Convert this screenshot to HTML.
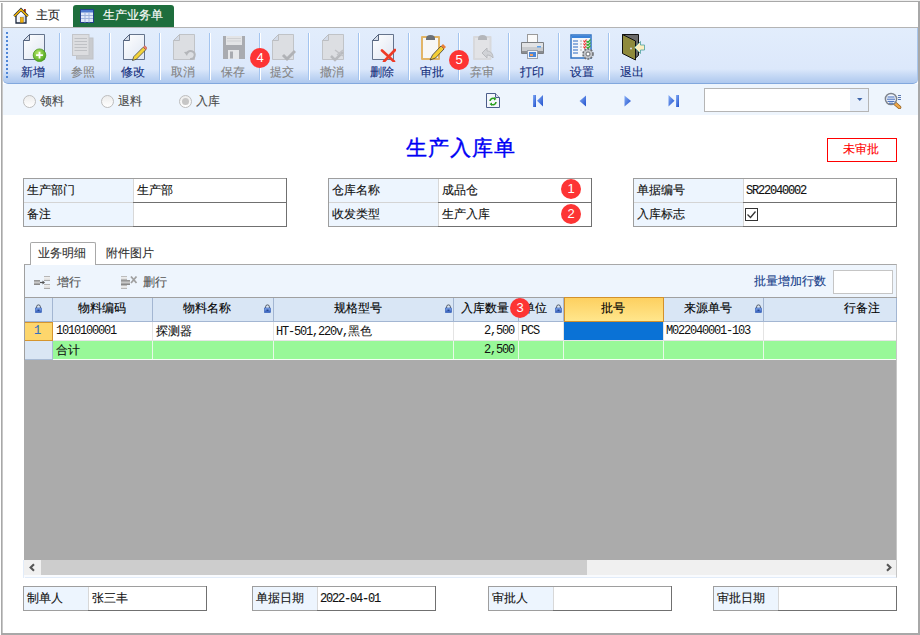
<!DOCTYPE html>
<html><head><meta charset="utf-8"><style>
*{margin:0;padding:0;box-sizing:border-box}
html,body{width:920px;height:635px;overflow:hidden;background:#fff;font-family:"Liberation Sans",sans-serif;font-size:12px;color:#111}
.a{position:absolute}
.t{position:absolute;white-space:nowrap;line-height:14px;font-size:12px;-webkit-text-stroke-width:0.12px}
.m{font-family:"Liberation Mono",monospace;font-size:10px}
</style></head><body>
<div class="a" style="left:0px;top:0px;width:920px;height:1px;background:#efefef"></div>
<div class="a" style="left:0px;top:1px;width:920px;height:1px;background:#a8a8a8"></div>
<div class="a" style="left:1px;top:3px;width:1px;height:632px;background:#a8a8a8"></div>
<div class="a" style="left:2px;top:3px;width:1px;height:632px;background:#c8c8c8"></div>
<div class="a" style="left:918px;top:1px;width:2px;height:634px;background:#a8a8a8"></div>
<div class="a" style="left:1px;top:633px;width:919px;height:2px;background:#a8a8a8"></div>
<div class="a" style="left:2px;top:27px;width:916px;height:1px;background:#b4b4b4"></div>
<svg class="a" style="left:13px;top:7px" width="16" height="17" viewBox="0 0 16 17">
 <defs><linearGradient id="hw" x1="0" y1="0" x2="1" y2="0"><stop offset="0" stop-color="#fff"/><stop offset="1" stop-color="#c9d3e6"/></linearGradient></defs>
 <path d="M3 8.5v7.5h10v-7.5" fill="url(#hw)" stroke="#1e2a40" stroke-width="1.3"/>
 <rect x="11" y="2" width="1.8" height="4" fill="#9a2a1e"/>
 <path d="M1.3 9.3L8 2.6 14.7 9.3" fill="none" stroke="#1e2a40" stroke-width="2.8"/>
 <path d="M1.3 9.3L8 2.6 14.7 9.3" fill="none" stroke="#f4b400" stroke-width="1.5"/>
 <rect x="7.3" y="10.5" width="3" height="5" fill="#f2b20e" stroke="#b07a00" stroke-width="0.5"/>
</svg>
<div class="t" style="left:36px;top:8px;color:#222">主页</div>
<div class="a" style="left:73px;top:5px;width:101px;height:22px;background:#1e6e3d;border-radius:3px 3px 0 0"></div>
<svg class="a" style="left:80px;top:9px" width="14" height="14" viewBox="0 0 14 14">
 <rect x="0.5" y="0.5" width="13" height="13" fill="#dfe8f8" stroke="#23408a"/>
 <rect x="1" y="1" width="12" height="2.5" fill="#4f7ad0"/>
 <path d="M1 6.5h12M1 9.5h12M5 3.5v10M9 3.5v10" stroke="#9fb4dc" stroke-width="1"/>
</svg>
<div class="t" style="left:103px;top:8px;color:#fff">生产业务单</div>
<div class="a" style="left:3px;top:28px;width:915px;height:56px;border-radius:0 0 5px 5px;background:linear-gradient(#e2edfc 0px,#dce8fb 41px,#cadcf6 46px,#aec8ee 55px);border-bottom:1px solid #82a8de"></div>
<div class="a" style="left:917px;top:28px;width:1px;height:52px;background:#a9c6ec"></div>
<div class="a" style="left:6px;top:32px;width:2px;height:47px;background:repeating-linear-gradient(#4f86d6 0 2px,transparent 2px 4px)"></div>
<svg class="a" style="left:21px;top:32px" width="26" height="30" viewBox="0 0 26 30"><defs><linearGradient id="pg" x1="0" y1="0" x2="1" y2="1"><stop offset="0" stop-color="#fff"/><stop offset="1" stop-color="#dfe6f2"/></linearGradient></defs><path d="M8.5 2.5H23.5V27.5H2.5V8.5z" fill="url(#pg)" stroke="#56657f" stroke-width="0.9"/><path d="M8.5 2.5V8.5H2.5z" fill="#d3dbe8" stroke="#56657f" stroke-linejoin="bevel"/><defs><radialGradient id="gc" cx="0.4" cy="0.35" r="0.7"><stop offset="0" stop-color="#b8ea6a"/><stop offset="1" stop-color="#48a018"/></radialGradient></defs><circle cx="18.5" cy="23.2" r="6.3" fill="url(#gc)" stroke="#4a9a1e" stroke-width="0.8"/><path d="M18.5 19.8v6.8M15.1 23.2h6.8" stroke="#fff" stroke-width="1.8"/></svg>
<div class="t" style="left:8px;top:65px;width:50px;text-align:center;color:#142e7c">新增</div>
<div class="a" style="left:59px;top:33px;width:1px;height:47px;background:#a3c4ef"></div>
<div class="a" style="left:60px;top:33px;width:1px;height:47px;background:#fff"></div>
<svg class="a" style="left:71px;top:32px" width="26" height="30" viewBox="0 0 26 30"><rect x="5.5" y="6" width="16.5" height="21" fill="#c9cbcf" stroke="#c0c2c6"/><rect x="1.5" y="2.5" width="16.5" height="21" fill="#dcdde0" stroke="#c4c6ca"/><path d="M3.5 6.5h12.5M3.5 9.5h12.5M3.5 12.5h12.5M3.5 15.5h12.5M3.5 18.5h12.5" stroke="#bfc1c5"/></svg>
<div class="t" style="left:58px;top:65px;width:50px;text-align:center;color:#858585">参照</div>
<div class="a" style="left:109px;top:33px;width:1px;height:47px;background:#a3c4ef"></div>
<div class="a" style="left:110px;top:33px;width:1px;height:47px;background:#fff"></div>
<svg class="a" style="left:121px;top:32px" width="26" height="30" viewBox="0 0 26 30"><path d="M8.5 2.5H23.5V27.5H2.5V8.5z" fill="url(#pg)" stroke="#56657f" stroke-width="0.9"/><path d="M8.5 2.5V8.5H2.5z" fill="#d3dbe8" stroke="#56657f" stroke-linejoin="bevel"/><path d="M11.5 28.5l1.2-3.8 9.5-9.5 2.6 2.6-9.5 9.5z" fill="#f4d43a" stroke="#333" stroke-width="0.7"/><path d="M22.2 15.2l1.6-1.6 2.6 2.6-1.6 1.6z" fill="#e8806a" stroke="#a55" stroke-width="0.5"/></svg>
<div class="t" style="left:108px;top:65px;width:50px;text-align:center;color:#142e7c">修改</div>
<div class="a" style="left:159px;top:33px;width:1px;height:47px;background:#a3c4ef"></div>
<div class="a" style="left:160px;top:33px;width:1px;height:47px;background:#fff"></div>
<svg class="a" style="left:171px;top:32px" width="26" height="30" viewBox="0 0 26 30"><path d="M8.5 2.5H23.5V27.5H2.5V8.5z" fill="#dcdee2" stroke="#bcbec2" stroke-width="0.9"/><path d="M8.5 2.5V8.5H2.5z" fill="#d3dbe8" stroke="#bcbec2" stroke-linejoin="bevel"/><path d="M16 21.5a4 4 0 1 1 3 5.5" fill="none" stroke="#b4b6ba" stroke-width="2"/><path d="M13 20l4.5-0.5-1.5 4.5z" fill="#b4b6ba"/></svg>
<div class="t" style="left:158px;top:65px;width:50px;text-align:center;color:#858585">取消</div>
<div class="a" style="left:209px;top:33px;width:1px;height:47px;background:#a3c4ef"></div>
<div class="a" style="left:210px;top:33px;width:1px;height:47px;background:#fff"></div>
<svg class="a" style="left:221px;top:32px" width="26" height="30" viewBox="0 0 26 30"><path d="M2 4h22v23h-22z" fill="#a9abb0"/><rect x="5" y="4" width="16" height="9" fill="#e3e4e6"/><path d="M6 6.5h14M6 9h14" stroke="#cfd0d3"/><rect x="7" y="18" width="11" height="9" fill="#e6e7e9"/><rect x="9" y="19.5" width="3" height="7" fill="#a9abb0"/></svg>
<div class="t" style="left:208px;top:65px;width:50px;text-align:center;color:#858585">保存</div>
<div class="a" style="left:259px;top:33px;width:1px;height:47px;background:#a3c4ef"></div>
<div class="a" style="left:260px;top:33px;width:1px;height:47px;background:#fff"></div>
<svg class="a" style="left:270px;top:32px" width="26" height="30" viewBox="0 0 26 30"><path d="M8.5 2.5H23.5V27.5H2.5V8.5z" fill="#dcdee2" stroke="#bcbec2" stroke-width="0.9"/><path d="M8.5 2.5V8.5H2.5z" fill="#d3dbe8" stroke="#bcbec2" stroke-linejoin="bevel"/><path d="M13 23l4 4 8-8" fill="none" stroke="#b0b2b6" stroke-width="3"/></svg>
<div class="t" style="left:257px;top:65px;width:50px;text-align:center;color:#858585">提交</div>
<div class="a" style="left:308px;top:33px;width:1px;height:47px;background:#a3c4ef"></div>
<div class="a" style="left:309px;top:33px;width:1px;height:47px;background:#fff"></div>
<svg class="a" style="left:320px;top:32px" width="26" height="30" viewBox="0 0 26 30"><path d="M8.5 2.5H23.5V27.5H2.5V8.5z" fill="#dcdee2" stroke="#bcbec2" stroke-width="0.9"/><path d="M8.5 2.5V8.5H2.5z" fill="#d3dbe8" stroke="#bcbec2" stroke-linejoin="bevel"/><path d="M11 24l4 4 8-8" fill="none" stroke="#b8babe" stroke-width="2.5"/><path d="M15 18l8 6M23 18l-6 5" stroke="#c0c2c6" stroke-width="1.5"/></svg>
<div class="t" style="left:307px;top:65px;width:50px;text-align:center;color:#858585">撤消</div>
<div class="a" style="left:358px;top:33px;width:1px;height:47px;background:#a3c4ef"></div>
<div class="a" style="left:359px;top:33px;width:1px;height:47px;background:#fff"></div>
<svg class="a" style="left:370px;top:32px" width="26" height="30" viewBox="0 0 26 30"><path d="M8.5 2.5H23.5V27.5H2.5V8.5z" fill="url(#pg)" stroke="#56657f" stroke-width="0.9"/><path d="M8.5 2.5V8.5H2.5z" fill="#d3dbe8" stroke="#56657f" stroke-linejoin="bevel"/><path d="M12 18.5l12 11M25 18l-11 11.5" stroke="#ee3a26" stroke-width="2.6" stroke-linecap="round"/></svg>
<div class="t" style="left:357px;top:65px;width:50px;text-align:center;color:#142e7c">删除</div>
<div class="a" style="left:408px;top:33px;width:1px;height:47px;background:#a3c4ef"></div>
<div class="a" style="left:409px;top:33px;width:1px;height:47px;background:#fff"></div>
<svg class="a" style="left:420px;top:32px" width="26" height="30" viewBox="0 0 26 30"><rect x="1" y="4" width="19" height="24" rx="1" fill="#e2b566"/><rect x="3" y="6" width="15" height="20" fill="#f7f7f5"/><path d="M6 6.5c0-2 1.5-3.5 4.5-3.5s4.5 1.5 4.5 3.5v1.5h-9z" fill="#6b7077"/><path d="M10 28l2.5-5 8.5-9 3 3-8.5 9z" fill="#f4cf35" stroke="#3a3a3a" stroke-width="0.8"/><path d="M21 14l2-2 3 3-2 2z" fill="#e8803a"/></svg>
<div class="t" style="left:407px;top:65px;width:50px;text-align:center;color:#142e7c">审批</div>
<div class="a" style="left:458px;top:33px;width:1px;height:47px;background:#a3c4ef"></div>
<div class="a" style="left:459px;top:33px;width:1px;height:47px;background:#fff"></div>
<svg class="a" style="left:470px;top:32px" width="26" height="30" viewBox="0 0 26 30"><rect x="3" y="4" width="18.5" height="24" rx="1" fill="#d8d9dc"/><rect x="5" y="6" width="14.5" height="20" fill="#e2e3e6"/><path d="M8 6.5c0-2 1.5-3.5 4.5-3.5s4.5 1.5 4.5 3.5v1.5h-9z" fill="#b4b6ba"/><path d="M12 21l5-5v3c4 0 6 3 6 7-1.5-2-3-3-6-3v3z" fill="#d0d2d6" stroke="#b8babe"/></svg>
<div class="t" style="left:457px;top:65px;width:50px;text-align:center;color:#858585">弃审</div>
<div class="a" style="left:508px;top:33px;width:1px;height:47px;background:#a3c4ef"></div>
<div class="a" style="left:509px;top:33px;width:1px;height:47px;background:#fff"></div>
<svg class="a" style="left:520px;top:32px" width="26" height="30" viewBox="0 0 26 30"><rect x="7.5" y="2.5" width="10" height="9" fill="#fafafa" stroke="#9a9a9a"/><path d="M1.5 10.5h22v11h-22z" fill="#c9cbce" stroke="#7c7f83"/><rect x="2" y="11" width="21" height="4" fill="#e2e3e5"/><rect x="2" y="19" width="21" height="2" fill="#8a8d91"/><rect x="7.5" y="18.5" width="10" height="8" fill="#f2f4f8" stroke="#9aa0aa"/><rect x="9" y="20" width="7" height="5" fill="#4a86d8"/><rect x="10" y="22" width="3" height="2" fill="#f0a060"/><rect x="17" y="14" width="4" height="1.5" fill="#5fa0e8"/></svg>
<div class="t" style="left:507px;top:65px;width:50px;text-align:center;color:#142e7c">打印</div>
<div class="a" style="left:558px;top:33px;width:1px;height:47px;background:#a3c4ef"></div>
<div class="a" style="left:559px;top:33px;width:1px;height:47px;background:#fff"></div>
<svg class="a" style="left:570px;top:32px" width="26" height="30" viewBox="0 0 26 30"><rect x="1" y="3" width="20" height="23" fill="#f4f7fb" stroke="#2f72c2" stroke-width="1.5"/><rect x="1.5" y="3.5" width="19" height="2.5" fill="#3a82d8"/><path d="M3 9h5M3 12h5M3 15h5M3 18h5M3 21h5" stroke="#8fb0de" stroke-width="2"/><path d="M10 9h2M10 12h2M10 15h2M10 18h2" stroke="#b0b0b0"/><path d="M13.5 8.5l1 1.5 2-2.5M13.5 11.5l1 1.5 2-2.5M13.5 14.5l1 1.5 2-2.5" stroke="#e33" stroke-width="1.2" fill="none"/><path d="M16.5 9l1.5 1.5 2.5-3M16.5 12l1.5 1.5 2.5-3M16.5 15l1.5 1.5 2.5-3" stroke="#3a3" stroke-width="1.2" fill="none"/><circle cx="18" cy="22" r="5" fill="#c2c4c8" stroke="#6c6f73" stroke-width="1.6" stroke-dasharray="2 1.2"/><circle cx="18" cy="22" r="2" fill="#fff" stroke="#6c6f73"/></svg>
<div class="t" style="left:557px;top:65px;width:50px;text-align:center;color:#142e7c">设置</div>
<div class="a" style="left:608px;top:33px;width:1px;height:47px;background:#a3c4ef"></div>
<div class="a" style="left:609px;top:33px;width:1px;height:47px;background:#fff"></div>
<svg class="a" style="left:620px;top:32px" width="26" height="30" viewBox="0 0 26 30"><path d="M2.5 2.5h16v21l-3 2.5z" fill="#6a6a6a" stroke="#111"/><path d="M2.5 2.5l13 6.5v19l-13-6.5z" fill="#8f8a3c" stroke="#111"/><circle cx="11" cy="16.5" r="1" fill="#d8d8e8"/><path d="M14.5 15.5l6-6v3.5h4v5h-4v3.5z" fill="#fcefc0" stroke="#49a0a0" stroke-width="0.8"/></svg>
<div class="t" style="left:607px;top:65px;width:50px;text-align:center;color:#142e7c">退出</div>
<div class="a" style="left:250px;top:48px;width:20px;height:20px;border-radius:50%;background:#fd3434;color:#fff;text-align:center;line-height:20px;font-size:13px">4</div>
<div class="a" style="left:449px;top:50px;width:20px;height:20px;border-radius:50%;background:#fd3434;color:#fff;text-align:center;line-height:20px;font-size:13px">5</div>
<div class="a" style="left:3px;top:84px;width:915px;height:31px;background:#eef5fd"></div>
<div class="a" style="left:23px;top:95px;width:13px;height:13px;border-radius:50%;border:1px solid #bdbdbd;background:linear-gradient(#ececec,#fff)"></div>
<div class="t" style="left:40px;top:94px;color:#4a4a4a">领料</div>
<div class="a" style="left:101px;top:95px;width:13px;height:13px;border-radius:50%;border:1px solid #bdbdbd;background:linear-gradient(#ececec,#fff)"></div>
<div class="t" style="left:118px;top:94px;color:#4a4a4a">退料</div>
<div class="a" style="left:179px;top:95px;width:13px;height:13px;border-radius:50%;border:1px solid #bdbdbd;background:linear-gradient(#ececec,#fff)"></div>
<div class="a" style="left:182px;top:98px;width:7px;height:7px;border-radius:50%;background:#c6c6c6"></div>
<div class="t" style="left:196px;top:94px;color:#4a4a4a">入库</div>
<svg class="a" style="left:486px;top:93px" width="14" height="15" viewBox="0 0 14 15">
<path d="M0.5 0.5h9l4 4v10h-13z" fill="#f4f7fc" stroke="#4b5d8a"/><path d="M9.5 0.5v4h4" fill="#dde" stroke="#4b5d8a"/>
<path d="M4 8a3 3 0 0 1 5-2M10 9a3 3 0 0 1-5 2" stroke="#2aa01e" stroke-width="1.6" fill="none"/>
<path d="M8 4l2.5 2-2.5 1.5zM6 13l-2.5-2 2.5-1.5z" fill="#2aa01e"/></svg>
<svg class="a" style="left:0;top:0" width="1" height="1"><defs><linearGradient id="ng" x1="0" y1="0" x2="1" y2="1"><stop offset="0" stop-color="#86aef6"/><stop offset="1" stop-color="#1f4fcc"/></linearGradient></defs></svg>
<svg class="a" style="left:533px;top:95px" width="11" height="12" viewBox="0 0 11 12"><rect x="0" y="0" width="3" height="12" fill="url(#ng)"/><path d="M10 0v11.5l-6-5.75z" fill="url(#ng)"/></svg>
<svg class="a" style="left:579px;top:95px" width="8" height="12" viewBox="0 0 8 12"><path d="M7 0.5v11l-6.5-5.5z" fill="url(#ng)"/></svg>
<svg class="a" style="left:624px;top:95px" width="8" height="12" viewBox="0 0 8 12"><path d="M0.5 0.5v11l6.5-5.5z" fill="url(#ng)"/></svg>
<svg class="a" style="left:668px;top:95px" width="11" height="12" viewBox="0 0 11 12"><path d="M0.5 0v11.5l6-5.75z" fill="url(#ng)"/><rect x="8" y="0" width="3" height="12" fill="url(#ng)"/></svg>
<div class="a" style="left:704px;top:88px;width:165px;height:24px;background:#fff;border:1px solid #b5b5b5"></div>
<div class="a" style="left:850px;top:89px;width:18px;height:22px;background:#e8f0fb"></div>
<svg class="a" style="left:857px;top:98px" width="6" height="4" viewBox="0 0 6 4"><path d="M0 0h5.5l-2.75 3z" fill="#3f66aa"/></svg>
<svg class="a" style="left:884px;top:92px" width="19" height="17" viewBox="0 0 19 17">
<path d="M11 11.5l4.5 3.8" stroke="#8a5a20" stroke-width="3.6" stroke-linecap="round"/><path d="M11 11.5l4.5 3.8" stroke="#f0a848" stroke-width="2.4" stroke-linecap="round"/>
<circle cx="7" cy="7" r="5.6" fill="#f2f7ff" stroke="#7d838c" stroke-width="1.5"/>
<path d="M3.5 5h7M3 7.2h8M3.5 9.4h7M5 11.2h4" stroke="#2a58b0" stroke-width="0.9"/>
<path d="M14 3.5h3M14 5.5h3M14 7.5h3" stroke="#4a6aa8" stroke-width="0.9"/></svg>
<div class="t" style="left:406px;top:136px;font-size:21px;line-height:24px;color:#0000f5;letter-spacing:0.9px;-webkit-text-stroke:0.4px #0000f5">生产入库单</div>
<div class="a" style="left:827px;top:138px;width:70px;height:24px;border:1px solid #f00"></div>
<div class="t" style="left:843px;top:142px;color:#f00">未审批</div>
<div class="a" style="left:23px;top:178px;width:264px;height:49px;background:#fff;border:1px solid #9e9e9e"></div>
<div class="a" style="left:24px;top:179px;width:109px;height:47px;background:#edf5fe"></div>
<div class="a" style="left:133px;top:179px;width:1px;height:47px;background:#d8d8d8"></div>
<div class="t" style="left:27px;top:183px;">生产部门</div>
<div class="t" style="left:137px;top:183px">生产部</div>
<div class="a" style="left:24px;top:202px;width:109px;height:1px;background:#d4d4d4"></div>
<div class="a" style="left:133px;top:202px;width:154px;height:1px;background:#707070"></div>
<div class="t" style="left:27px;top:207px;">备注</div>
<div class="a" style="left:133px;top:226px;width:154px;height:1px;background:#707070"></div>
<div class="a" style="left:286px;top:178px;width:1px;height:49px;background:#707070"></div>
<div class="a" style="left:328px;top:178px;width:264px;height:49px;background:#fff;border:1px solid #9e9e9e"></div>
<div class="a" style="left:329px;top:179px;width:109px;height:47px;background:#edf5fe"></div>
<div class="a" style="left:438px;top:179px;width:1px;height:47px;background:#d8d8d8"></div>
<div class="t" style="left:332px;top:183px;">仓库名称</div>
<div class="t" style="left:442px;top:183px">成品仓</div>
<div class="a" style="left:329px;top:202px;width:109px;height:1px;background:#d4d4d4"></div>
<div class="a" style="left:438px;top:202px;width:154px;height:1px;background:#707070"></div>
<div class="t" style="left:332px;top:207px;">收发类型</div>
<div class="t" style="left:442px;top:207px">生产入库</div>
<div class="a" style="left:438px;top:226px;width:154px;height:1px;background:#707070"></div>
<div class="a" style="left:591px;top:178px;width:1px;height:49px;background:#707070"></div>
<div class="a" style="left:633px;top:178px;width:264px;height:49px;background:#fff;border:1px solid #9e9e9e"></div>
<div class="a" style="left:634px;top:179px;width:109px;height:47px;background:#edf5fe"></div>
<div class="a" style="left:743px;top:179px;width:1px;height:47px;background:#d8d8d8"></div>
<div class="t" style="left:637px;top:183px;">单据编号</div>
<div class="a" style="left:634px;top:202px;width:109px;height:1px;background:#d4d4d4"></div>
<div class="a" style="left:743px;top:202px;width:154px;height:1px;background:#707070"></div>
<div class="t" style="left:637px;top:207px;">入库标志</div>
<div class="a" style="left:743px;top:226px;width:154px;height:1px;background:#707070"></div>
<div class="a" style="left:896px;top:178px;width:1px;height:49px;background:#707070"></div>
<div class="t" style="left:746px;top:184px;font-family:Liberation Mono;font-size:12px;letter-spacing:-1.2px;color:#111">SR22040002</div>
<div class="a" style="left:561px;top:179px;width:20px;height:20px;border-radius:50%;background:#fd3434;color:#fff;text-align:center;line-height:20px;font-size:13px">1</div>
<div class="a" style="left:561px;top:204px;width:20px;height:20px;border-radius:50%;background:#fd3434;color:#fff;text-align:center;line-height:20px;font-size:13px">2</div>
<svg class="a" style="left:745px;top:208px" width="13" height="13" viewBox="0 0 13 13">
<rect x="0.5" y="0.5" width="12" height="12" fill="#fff" stroke="#333"/><path d="M2.5 6.5l3 3 5-6" fill="none" stroke="#333" stroke-width="1.3"/></svg>
<div class="a" style="left:24px;top:264px;width:873px;height:314px;background:#eef5fd;border:1px solid #c6c6c6;border-left:1px solid #a0a0a0;border-top:1px solid #a8a8a8;border-bottom:1px solid #e2ecf9"></div>
<div class="a" style="left:25px;top:575px;width:871px;height:2px;background:#f9fbfe"></div>
<div class="a" style="left:30px;top:242px;width:66px;height:23px;background:#fff;border:1px solid #a8a8a8;border-bottom:none;border-radius:2px 2px 0 0"></div>
<div class="t" style="left:38px;top:246px;color:#333">业务明细</div>
<div class="t" style="left:106px;top:246px;color:#333">附件图片</div>
<svg class="a" style="left:33px;top:275px" width="18" height="15" viewBox="0 0 18 15">
<defs><linearGradient id="gb" x1="0" y1="0" x2="0" y2="1"><stop offset="0" stop-color="#8a8a8a"/><stop offset="0.5" stop-color="#c8c8c8"/><stop offset="1" stop-color="#7a7a7a"/></linearGradient>
<linearGradient id="gl" x1="0" y1="0" x2="0" y2="1"><stop offset="0" stop-color="#999"/><stop offset="0.3" stop-color="#eee"/><stop offset="0.8" stop-color="#ddd"/><stop offset="1" stop-color="#777"/></linearGradient></defs>
<rect x="1" y="5" width="6" height="5" fill="url(#gb)"/><path d="M7 7.5h3" stroke="#555" stroke-width="1.2"/><path d="M9.5 5.5l2.5 2-2.5 2z" fill="#555"/>
<rect x="11" y="1" width="6" height="5" fill="url(#gl)"/><rect x="11" y="9" width="6" height="5" fill="url(#gl)"/></svg>
<div class="t" style="left:57px;top:275px;color:#555">增行</div>
<svg class="a" style="left:120px;top:275px" width="18" height="15" viewBox="0 0 18 15">
<rect x="1" y="1" width="6" height="4" fill="url(#gl)"/><rect x="1" y="5" width="9" height="5" fill="url(#gb)"/><rect x="1" y="10" width="6" height="4" fill="url(#gl)"/>
<path d="M11 1.5l5.5 6.5M16.5 1.5l-5.5 6.5" stroke="#a0a0a0" stroke-width="1.8"/></svg>
<div class="t" style="left:143px;top:275px;color:#555">删行</div>
<div class="t" style="left:754px;top:274px;color:#17408a">批量增加行数</div>
<div class="a" style="left:833px;top:270px;width:60px;height:24px;background:#fff;border:1px solid #c5c5c5"></div>
<div class="a" style="left:24px;top:297px;width:873px;height:1px;background:#a0a0a0"></div>
<div class="a" style="left:25px;top:298px;width:871px;height:23px;background:#d9e6f5"></div>
<div class="a" style="left:25px;top:321px;width:871px;height:1px;background:#a3b6d2"></div>
<div class="a" style="left:896px;top:298px;width:1px;height:24px;background:#a3b6d2"></div>
<div class="a" style="left:52px;top:298px;width:1px;height:23px;background:#a3b6d2"></div>
<div class="a" style="left:152px;top:298px;width:1px;height:23px;background:#a3b6d2"></div>
<div class="a" style="left:273px;top:298px;width:1px;height:23px;background:#a3b6d2"></div>
<div class="a" style="left:453px;top:298px;width:1px;height:23px;background:#a3b6d2"></div>
<div class="a" style="left:518px;top:298px;width:1px;height:23px;background:#a3b6d2"></div>
<div class="a" style="left:563px;top:298px;width:1px;height:23px;background:#a3b6d2"></div>
<div class="a" style="left:663px;top:298px;width:1px;height:23px;background:#a3b6d2"></div>
<div class="a" style="left:763px;top:298px;width:1px;height:23px;background:#a3b6d2"></div>
<div class="a" style="left:564px;top:297px;width:100px;height:25px;background:linear-gradient(#fdd060,#ffe68c);border:1px solid #d3912c"></div>
<div class="t" style="left:52px;top:301px;width:99px;text-align:center;color:#000">物料编码</div>
<div class="t" style="left:152px;top:301px;width:110px;text-align:center;color:#000">物料名称</div>
<div class="t" style="left:273px;top:301px;width:169px;text-align:center;color:#000">规格型号</div>
<div class="t" style="left:453px;top:301px;width:64px;text-align:center;color:#000">入库数量</div>
<div class="t" style="left:518px;top:301px;width:34px;text-align:center;color:#000">单位</div>
<div class="t" style="left:563px;top:301px;width:99px;text-align:center;color:#000">批号</div>
<div class="t" style="left:663px;top:301px;width:89px;text-align:center;color:#000">来源单号</div>
<div class="t" style="left:844px;top:301px;color:#000">行备注</div>
<svg class="a" style="left:35px;top:304px" width="7" height="9" viewBox="0 0 7 9"><path d="M1.6 4.2V2.8a1.9 1.9 0 0 1 3.8 0V4.2" fill="none" stroke="#555b66" stroke-width="1"/><defs><linearGradient id="lk" x1="0" y1="0" x2="0" y2="1"><stop offset="0" stop-color="#8fb2ee"/><stop offset="1" stop-color="#2a56b8"/></linearGradient></defs><rect x="0.5" y="4" width="6" height="4.5" fill="url(#lk)" stroke="#2f5bb4" stroke-width="0.6"/><rect x="2.5" y="5.6" width="2" height="1.2" fill="#1a3a80"/></svg>
<svg class="a" style="left:264px;top:304px" width="7" height="9" viewBox="0 0 7 9"><path d="M1.6 4.2V2.8a1.9 1.9 0 0 1 3.8 0V4.2" fill="none" stroke="#555b66" stroke-width="1"/><defs><linearGradient id="lk" x1="0" y1="0" x2="0" y2="1"><stop offset="0" stop-color="#8fb2ee"/><stop offset="1" stop-color="#2a56b8"/></linearGradient></defs><rect x="0.5" y="4" width="6" height="4.5" fill="url(#lk)" stroke="#2f5bb4" stroke-width="0.6"/><rect x="2.5" y="5.6" width="2" height="1.2" fill="#1a3a80"/></svg>
<svg class="a" style="left:445px;top:304px" width="7" height="9" viewBox="0 0 7 9"><path d="M1.6 4.2V2.8a1.9 1.9 0 0 1 3.8 0V4.2" fill="none" stroke="#555b66" stroke-width="1"/><defs><linearGradient id="lk" x1="0" y1="0" x2="0" y2="1"><stop offset="0" stop-color="#8fb2ee"/><stop offset="1" stop-color="#2a56b8"/></linearGradient></defs><rect x="0.5" y="4" width="6" height="4.5" fill="url(#lk)" stroke="#2f5bb4" stroke-width="0.6"/><rect x="2.5" y="5.6" width="2" height="1.2" fill="#1a3a80"/></svg>
<svg class="a" style="left:555px;top:304px" width="7" height="9" viewBox="0 0 7 9"><path d="M1.6 4.2V2.8a1.9 1.9 0 0 1 3.8 0V4.2" fill="none" stroke="#555b66" stroke-width="1"/><defs><linearGradient id="lk" x1="0" y1="0" x2="0" y2="1"><stop offset="0" stop-color="#8fb2ee"/><stop offset="1" stop-color="#2a56b8"/></linearGradient></defs><rect x="0.5" y="4" width="6" height="4.5" fill="url(#lk)" stroke="#2f5bb4" stroke-width="0.6"/><rect x="2.5" y="5.6" width="2" height="1.2" fill="#1a3a80"/></svg>
<svg class="a" style="left:755px;top:304px" width="7" height="9" viewBox="0 0 7 9"><path d="M1.6 4.2V2.8a1.9 1.9 0 0 1 3.8 0V4.2" fill="none" stroke="#555b66" stroke-width="1"/><defs><linearGradient id="lk" x1="0" y1="0" x2="0" y2="1"><stop offset="0" stop-color="#8fb2ee"/><stop offset="1" stop-color="#2a56b8"/></linearGradient></defs><rect x="0.5" y="4" width="6" height="4.5" fill="url(#lk)" stroke="#2f5bb4" stroke-width="0.6"/><rect x="2.5" y="5.6" width="2" height="1.2" fill="#1a3a80"/></svg>
<div class="a" style="left:52px;top:322px;width:844px;height:18px;background:#fff"></div>
<div class="a" style="left:24px;top:322px;width:29px;height:19px;background:#fdd66c;border:1px solid #d5952e"></div>
<div class="t" style="left:23px;top:324px;width:29px;text-align:center;color:#2f6fc0;font-family:Liberation Mono;font-size:12px">1</div>
<div class="a" style="left:152px;top:322px;width:1px;height:18px;background:#e4e4e4"></div>
<div class="a" style="left:273px;top:322px;width:1px;height:18px;background:#e4e4e4"></div>
<div class="a" style="left:453px;top:322px;width:1px;height:18px;background:#e4e4e4"></div>
<div class="a" style="left:518px;top:322px;width:1px;height:18px;background:#e4e4e4"></div>
<div class="a" style="left:563px;top:322px;width:1px;height:18px;background:#e4e4e4"></div>
<div class="a" style="left:663px;top:322px;width:1px;height:18px;background:#e4e4e4"></div>
<div class="a" style="left:763px;top:322px;width:1px;height:18px;background:#e4e4e4"></div>
<div class="a" style="left:896px;top:322px;width:1px;height:38px;background:#c8c8c8"></div>
<div class="a" style="left:53px;top:340px;width:843px;height:1px;background:#e6e6e6"></div>
<div class="a" style="left:564px;top:322px;width:99px;height:18px;background:#0a72d6"></div>
<div class="t" style="left:56px;top:324px;font-family:Liberation Mono;font-size:12px;letter-spacing:-1.2px;color:#111;-webkit-text-stroke-width:0">1010100001</div>
<div class="t" style="left:156px;top:324px;color:#111">探测器</div>
<div class="t" style="left:276px;top:324px;font-family:Liberation Mono;font-size:12px;letter-spacing:-1.2px;color:#111;-webkit-text-stroke-width:0">HT-501,220v,<span style="font-family:Liberation Sans;letter-spacing:0">黑色</span></div>
<div class="t" style="left:453px;top:324px;width:61px;text-align:right;font-family:Liberation Mono;font-size:12px;letter-spacing:-1.2px;color:#111;-webkit-text-stroke-width:0">2,500</div>
<div class="t" style="left:521px;top:324px;font-family:Liberation Mono;font-size:12px;letter-spacing:-1.2px;color:#111;-webkit-text-stroke-width:0">PCS</div>
<div class="t" style="left:666px;top:324px;font-family:Liberation Mono;font-size:12px;letter-spacing:-1.2px;color:#111;-webkit-text-stroke-width:0">M022040001-103</div>
<div class="a" style="left:25px;top:341px;width:27px;height:18px;background:#dae6f4"></div>
<div class="a" style="left:24px;top:359px;width:29px;height:1px;background:#a9bbd4"></div>
<div class="a" style="left:52px;top:341px;width:1px;height:19px;background:#a9bbd4"></div>
<div class="a" style="left:53px;top:341px;width:843px;height:18px;background:#98f898"></div>
<div class="a" style="left:53px;top:359px;width:843px;height:1px;background:#f4fff4"></div>
<div class="a" style="left:152px;top:341px;width:1px;height:18px;background:#e8f8e8"></div>
<div class="a" style="left:273px;top:341px;width:1px;height:18px;background:#e8f8e8"></div>
<div class="a" style="left:453px;top:341px;width:1px;height:18px;background:#e8f8e8"></div>
<div class="a" style="left:518px;top:341px;width:1px;height:18px;background:#e8f8e8"></div>
<div class="a" style="left:563px;top:341px;width:1px;height:18px;background:#e8f8e8"></div>
<div class="a" style="left:663px;top:341px;width:1px;height:18px;background:#e8f8e8"></div>
<div class="a" style="left:763px;top:341px;width:1px;height:18px;background:#e8f8e8"></div>
<div class="t" style="left:56px;top:343px;color:#111">合计</div>
<div class="t" style="left:453px;top:343px;width:61px;text-align:right;font-family:Liberation Mono;font-size:12px;letter-spacing:-1.2px;color:#111;-webkit-text-stroke-width:0">2,500</div>
<div class="a" style="left:24px;top:322px;width:1px;height:238px;background:#a0a0a0"></div>
<div class="a" style="left:510px;top:298px;width:20px;height:20px;border-radius:50%;background:#fd3434;color:#fff;text-align:center;line-height:20px;font-size:13px">3</div>
<div class="a" style="left:24px;top:360px;width:872px;height:200px;background:#ababab"></div>
<div class="a" style="left:24px;top:560px;width:872px;height:15px;background:#f0f0f0"></div>
<div class="a" style="left:24px;top:575px;width:1px;height:3px;background:#f9fbfe"></div>
<div class="a" style="left:23px;top:560px;width:1px;height:18px;background:#e2ecf9"></div>
<div class="a" style="left:41px;top:560px;width:546px;height:15px;background:#cdcdcd"></div>
<svg class="a" style="left:28px;top:563px" width="8" height="9" viewBox="0 0 8 9"><path d="M6 1.2L2.6 4.5 6 7.8" fill="none" stroke="#555" stroke-width="2.1"/></svg>
<svg class="a" style="left:885px;top:563px" width="8" height="9" viewBox="0 0 8 9"><path d="M2 1.2L5.4 4.5 2 7.8" fill="none" stroke="#555" stroke-width="2.1"/></svg>
<div class="a" style="left:23px;top:586px;width:184px;height:25px;background:#fff;border:1px solid #9e9e9e"></div>
<div class="a" style="left:24px;top:587px;width:64px;height:23px;background:#edf5fe"></div>
<div class="a" style="left:88px;top:587px;width:1px;height:23px;background:#d8d8d8"></div>
<div class="a" style="left:88px;top:610px;width:119px;height:1px;background:#707070"></div>
<div class="a" style="left:206px;top:586px;width:1px;height:25px;background:#707070"></div>
<div class="t" style="left:27px;top:591px;">制单人</div>
<div class="t" style="left:92px;top:591px;">张三丰</div>
<div class="a" style="left:252px;top:586px;width:184px;height:25px;background:#fff;border:1px solid #9e9e9e"></div>
<div class="a" style="left:253px;top:587px;width:64px;height:23px;background:#edf5fe"></div>
<div class="a" style="left:317px;top:587px;width:1px;height:23px;background:#d8d8d8"></div>
<div class="a" style="left:317px;top:610px;width:119px;height:1px;background:#707070"></div>
<div class="a" style="left:435px;top:586px;width:1px;height:25px;background:#707070"></div>
<div class="t" style="left:256px;top:591px;">单据日期</div>
<div class="t" style="left:320px;top:592px;font-family:Liberation Mono;font-size:12px;letter-spacing:-1.2px">2022-04-01</div>
<div class="a" style="left:488px;top:586px;width:184px;height:25px;background:#fff;border:1px solid #9e9e9e"></div>
<div class="a" style="left:489px;top:587px;width:64px;height:23px;background:#edf5fe"></div>
<div class="a" style="left:553px;top:587px;width:1px;height:23px;background:#d8d8d8"></div>
<div class="a" style="left:553px;top:610px;width:119px;height:1px;background:#707070"></div>
<div class="a" style="left:671px;top:586px;width:1px;height:25px;background:#707070"></div>
<div class="t" style="left:492px;top:591px;">审批人</div>
<div class="a" style="left:713px;top:586px;width:184px;height:25px;background:#fff;border:1px solid #9e9e9e"></div>
<div class="a" style="left:714px;top:587px;width:64px;height:23px;background:#edf5fe"></div>
<div class="a" style="left:778px;top:587px;width:1px;height:23px;background:#d8d8d8"></div>
<div class="a" style="left:778px;top:610px;width:119px;height:1px;background:#707070"></div>
<div class="a" style="left:896px;top:586px;width:1px;height:25px;background:#707070"></div>
<div class="t" style="left:717px;top:591px;">审批日期</div>
</body></html>
